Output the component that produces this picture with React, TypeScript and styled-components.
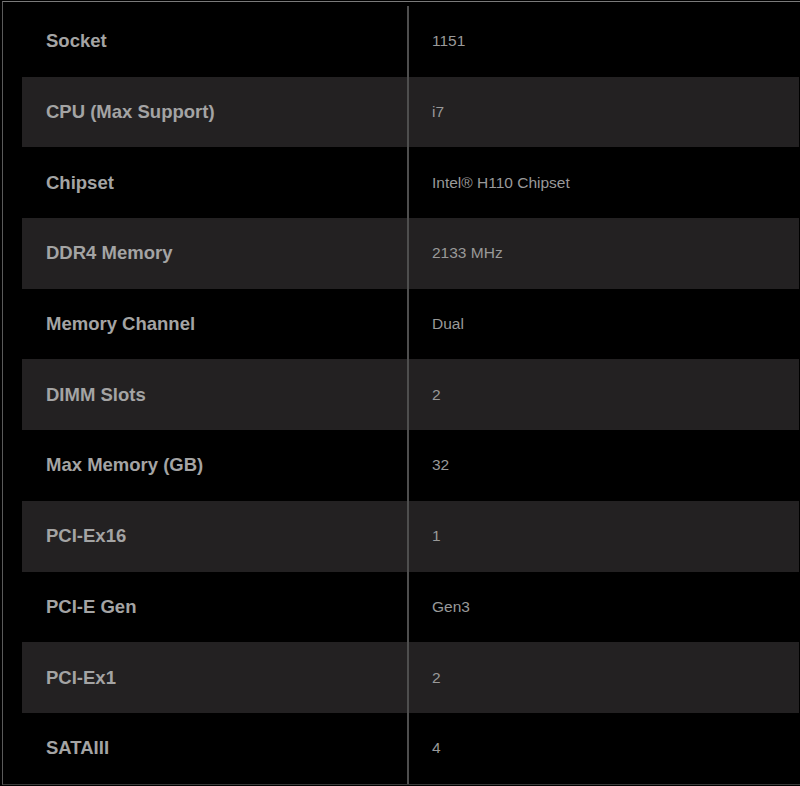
import React from "react";
import styled, { createGlobalStyle } from "styled-components";

const Global = createGlobalStyle`
  html, body { margin: 0; padding: 0; background: #000; }
  #root { width: 800px; height: 786px; }
`;

const Frame = styled.div`
  width: 800px;
  height: 786px;
  box-sizing: border-box;
  padding-top: 1px;
  background: #000;
  overflow: hidden;
`;

const Inner = styled.div`
  margin-left: 2px;
  height: 784px;
  box-sizing: border-box;
  border-top: 1px solid #7a7a7a;
  border-left: 1px solid #5a5a5a;
  border-bottom: 1px solid #3a3a3a;
  padding: 4px 1px 0 19px;
`;

const Table = styled.div`
  display: flex;
  flex-direction: column;
  font-family: "Liberation Sans", Arial, sans-serif;
`;

const Row = styled.div<{ $shaded: boolean }>`
  display: grid;
  grid-template-columns: 385px 1fr;
  height: 70.7px;
  background: ${(p) => (p.$shaded ? "#232122" : "#000")};
`;

const Label = styled.div`
  display: flex;
  align-items: center;
  padding-left: 24px;
  font-size: 18.5px;
  font-weight: 700;
  color: #a4a4a4;
`;

const Value = styled.div`
  display: flex;
  align-items: center;
  padding-left: 23px;
  border-left: 2px solid #4e4e4e;
  font-size: 15.5px;
  color: #999;
`;

const specs: [string, string][] = [
  ["Socket", "1151"],
  ["CPU (Max Support)", "i7"],
  ["Chipset", "Intel® H110 Chipset"],
  ["DDR4 Memory", "2133 MHz"],
  ["Memory Channel", "Dual"],
  ["DIMM Slots", "2"],
  ["Max Memory (GB)", "32"],
  ["PCI-Ex16", "1"],
  ["PCI-E Gen", "Gen3"],
  ["PCI-Ex1", "2"],
  ["SATAIII", "4"],
];

export default function App() {
  return (
    <>
      <Global />
      <Frame>
        <Inner>
          <Table>
            {specs.map(([k, v], i) => (
              <Row key={k} $shaded={i % 2 === 1}>
                <Label>{k}</Label>
                <Value>{v}</Value>
              </Row>
            ))}
          </Table>
        </Inner>
      </Frame>
    </>
  );
}
